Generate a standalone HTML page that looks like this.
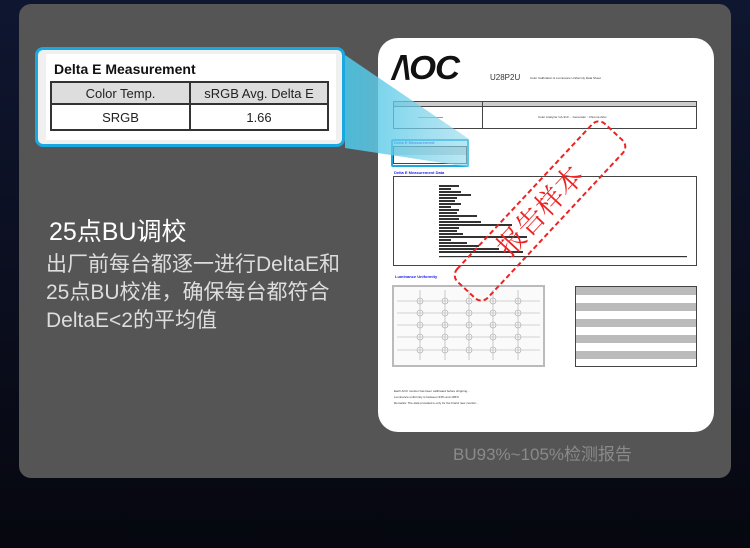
<!DOCTYPE html>
<html><head><meta charset="utf-8"><style>
*{margin:0;padding:0;box-sizing:border-box}
body{width:750px;height:548px;overflow:hidden;background:linear-gradient(180deg,#0f1630 0%,#0a0d1c 60%,#06070f 100%);font-family:"Liberation Sans","Noto Sans CJK SC",sans-serif;position:relative}
.card{position:absolute;left:19px;top:4px;width:712px;height:474px;background:#555556;border-radius:12px;overflow:hidden}
.paper{position:absolute;left:378px;top:38px;width:336px;height:394px;background:#fff;border-radius:20px;overflow:hidden}
.abs{position:absolute}
.t{font-size:3px;color:#333}
</style></head><body>
<div class="card"></div>
<div class="paper">
<div class="abs" style="left:14px;top:13px;font:italic 900 33px 'Liberation Sans',sans-serif;letter-spacing:-1px;color:#111;line-height:33px;transform:scaleX(1.05);transform-origin:left">/\OC</div>
<div class="abs" style="left:112px;top:35px;font-size:8px;color:#333">U28P2U</div>
<div class="abs t" style="left:152px;top:38px">Color Calibration &amp; Luminance Uniformity Data Sheet</div>
<div class="abs" style="left:15px;top:63px;width:304px;height:28px;border:1px solid #444"></div>
<div class="abs" style="left:15px;top:63px;width:304px;height:6px;background:#ccc;border:1px solid #444"></div>
<div class="abs" style="left:104px;top:63px;width:1px;height:28px;background:#444"></div>
<div class="abs" style="left:40px;top:79px;width:25px;height:1px;background:#99a"></div>
<div class="abs t" style="left:160px;top:77px">Color Analyzer CA-310 ... Generator : Chroma 22xx</div>
<div class="abs" style="left:13px;top:101px;width:78px;height:28px;border:2px solid #1aa8e0;border-radius:2px;background:#fff"></div>
<div class="abs" style="left:16px;top:102px;font-size:4px;color:#22e;font-weight:bold">Delta E Measurement</div>
<div class="abs" style="left:15px;top:108px;width:74px;height:18px;border:1px solid #444;background:linear-gradient(#ccc 0 8px,#fff 8px)"></div>
<div class="abs" style="left:16px;top:132px;font-size:4px;color:#22e;font-weight:bold">Delta E Measurement Data</div>
<div class="abs" style="left:15px;top:138px;width:304px;height:90px;border:1px solid #444"></div>
<svg class="abs" style="left:15px;top:138px" width="304" height="90">
<g fill="#333">
<rect x="46" y="9" width="20" height="2"/><rect x="46" y="12" width="12" height="2"/><rect x="46" y="15" width="22" height="2"/><rect x="46" y="18" width="32" height="2"/><rect x="46" y="21" width="18" height="2"/><rect x="46" y="24" width="16" height="2"/><rect x="46" y="27" width="22" height="2"/><rect x="46" y="30" width="12" height="2"/><rect x="46" y="33" width="20" height="2"/><rect x="46" y="36" width="18" height="2"/><rect x="46" y="39" width="38" height="2"/><rect x="46" y="42" width="20" height="2"/><rect x="46" y="45" width="42" height="2"/><rect x="46" y="48" width="73" height="2"/><rect x="46" y="51" width="20" height="2"/><rect x="46" y="54" width="18" height="2"/><rect x="46" y="57" width="24" height="2"/><rect x="46" y="60" width="88" height="2"/><rect x="46" y="63" width="12" height="2"/><rect x="46" y="66" width="28" height="2"/><rect x="46" y="69" width="40" height="2"/><rect x="46" y="72" width="60" height="2"/><rect x="46" y="75" width="84" height="2"/><rect x="46" y="80" width="248" height="1.2"/>
</g></svg>
<div class="abs" style="left:17px;top:236px;font-size:4px;color:#22e;font-weight:bold">Luminance Uniformity</div>
<div class="abs" style="left:14px;top:247px;width:153px;height:82px;border:2px solid #bbb;background:#fafafa"></div>
<svg class="abs" style="left:14px;top:247px" width="153" height="82"><g fill="none" stroke="#aaa" stroke-width=".6">
<circle cx="28" cy="16" r="3"/><circle cx="53" cy="16" r="3"/><circle cx="77" cy="16" r="3"/><circle cx="101" cy="16" r="3"/><circle cx="126" cy="16" r="3"/>
<circle cx="28" cy="28" r="3"/><circle cx="53" cy="28" r="3"/><circle cx="77" cy="28" r="3"/><circle cx="101" cy="28" r="3"/><circle cx="126" cy="28" r="3"/>
<circle cx="28" cy="40" r="3"/><circle cx="53" cy="40" r="3"/><circle cx="77" cy="40" r="3"/><circle cx="101" cy="40" r="3"/><circle cx="126" cy="40" r="3"/>
<circle cx="28" cy="52" r="3"/><circle cx="53" cy="52" r="3"/><circle cx="77" cy="52" r="3"/><circle cx="101" cy="52" r="3"/><circle cx="126" cy="52" r="3"/>
<circle cx="28" cy="65" r="3"/><circle cx="53" cy="65" r="3"/><circle cx="77" cy="65" r="3"/><circle cx="101" cy="65" r="3"/><circle cx="126" cy="65" r="3"/>
<path d="M5 16H148M5 28H148M5 40H148M5 52H148M5 65H148M28 5V75M53 5V75M77 5V75M101 5V75M126 5V75"/></g></svg>
<div class="abs" style="left:197px;top:248px;width:122px;height:81px;border:1px solid #444;background:repeating-linear-gradient(#bbb 0 8px,#fff 8px 16px)"></div>
<div class="abs t" style="left:16px;top:350px;line-height:6px">Each AOC monitor has been calibrated before shipping...<br>Luminance uniformity is between 93% and 105%<br>Remarks: The data provided is only for the brand new monitor...</div>
</div>
<svg class="abs" style="left:0;top:0" width="750" height="548">
<defs><linearGradient id="g" x1="0" x2="1"><stop offset="0" stop-color="#4cc6e6" stop-opacity=".9"/><stop offset="1" stop-color="#8fd8ec" stop-opacity=".6"/></linearGradient></defs>
<polygon points="345,55 469,139 469,167 345,148" fill="url(#g)"/>
</svg>
<svg class="abs" style="left:0;top:0" width="750" height="548">
<g transform="translate(540,211) rotate(-47)">
<rect x="-108" y="-21" width="216" height="42" rx="9" fill="none" stroke="#e22" stroke-width="2" stroke-dasharray="5,3"/>
<text x="0" y="10" text-anchor="middle" font-size="28" fill="#e22" font-family="'Noto Serif CJK SC',serif">报告样本</text>
</g></svg>
<div class="abs" style="left:35px;top:47px;width:310px;height:100px;background:#f0f0f0;border:3px solid #1aa8e0;border-radius:8px"></div>
<div class="abs" style="left:46px;top:54px;width:290px;height:86px;background:#fff"></div>
<div class="abs" style="left:54px;top:61px;font-weight:bold;font-size:14px;color:#111">Delta E Measurement</div>
<div class="abs" style="left:50px;top:81px;width:279px;height:50px;border:2px solid #333"></div>
<div class="abs" style="left:52px;top:83px;width:275px;height:22px;background:#ddd;border-bottom:2px solid #333"></div>
<div class="abs" style="left:189px;top:81px;width:2px;height:50px;background:#333"></div>
<div class="abs" style="left:52px;top:86px;width:137px;text-align:center;font-size:13px;color:#222">Color Temp.</div>
<div class="abs" style="left:191px;top:86px;width:136px;text-align:center;font-size:13px;color:#222">sRGB Avg. Delta E</div>
<div class="abs" style="left:52px;top:110px;width:137px;text-align:center;font-size:13px;color:#222">SRGB</div>
<div class="abs" style="left:191px;top:110px;width:136px;text-align:center;font-size:13px;color:#222">1.66</div>
<div class="abs" style="left:49px;top:212px;font-size:25px;color:#fff">25点BU调校</div>
<div class="abs" style="left:46px;top:251px;font-size:21px;line-height:28px;color:#ddd;white-space:nowrap">出厂前每台都逐一进行DeltaE和<br>25点BU校准，确保每台都符合<br>DeltaE&lt;2的平均值</div>
<div class="abs" style="left:453px;top:440px;font-size:17px;color:#8a8a8a">BU93%~105%检测报告</div>
</body></html>
